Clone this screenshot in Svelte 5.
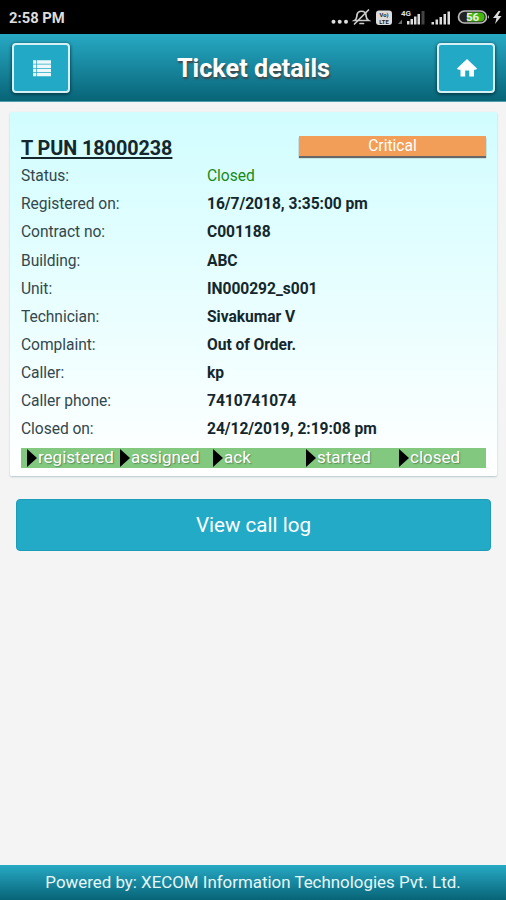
<script lang="ts">
  interface Field {
    label: string;
    value: string;
    closed?: boolean;
  }

  const fields: Field[] = [
    { label: "Status:", value: "Closed", closed: true },
    { label: "Registered on:", value: "16/7/2018, 3:35:00 pm" },
    { label: "Contract no:", value: "C001188" },
    { label: "Building:", value: "ABC" },
    { label: "Unit:", value: "IN000292_s001" },
    { label: "Technician:", value: "Sivakumar V" },
    { label: "Complaint:", value: "Out of Order." },
    { label: "Caller:", value: "kp" },
    { label: "Caller phone:", value: "7410741074" },
    { label: "Closed on:", value: "24/12/2019, 2:19:08 pm" },
  ];

  const steps = ["registered", "assigned", "ack", "started", "closed"];
</script>

<div class="screen">
  <div class="status-bar">
    <span class="clock">2:58 PM</span>
    <svg class="indicators" width="186" height="34" viewBox="0 0 186 34" aria-hidden="true">
      <g fill="#ddd">
        <circle cx="13.5" cy="21.7" r="2" />
        <circle cx="19.7" cy="21.7" r="2" />
        <circle cx="26" cy="21.7" r="2" />
      </g>
      <!-- muted bell -->
      <g fill="none" stroke="#ccc" stroke-width="1.7" stroke-linecap="round">
        <path d="M34.500 20.500c2.500-1.500 2-3 2.500-5.500c.5-5 8.500-5 9 0c.3 3 0 4 2.500 5.500z" />
        <path d="M48.500 10L34.500 24M40 23.500h3.500" />
      </g>
      <rect x="56" y="10.500" width="16" height="14.500" rx="3" fill="#ddd" />
      <text class="volte" x="64" y="16.500" text-anchor="middle">Vo)</text>
      <text class="volte" x="64" y="23.500" text-anchor="middle">LTE</text>
      <text class="network" x="81" y="16">4G</text>
      <g fill="#ddd">
        <path d="M78 24l4-4.500v4.500z" opacity=".5" />
        <path d="M87 21h2.500v3.500H87zM90.500 19H93v5.500h-2.500zM94 16.500h2.500v8H94zM97.500 14H100v10.500h-2.500z" />
        <path d="M101.500 11h3v13.500h-3z" opacity=".3" />
        <path d="M111.500 22h2.500v2.500h-2.500zM115.500 19.500h2.500v5h-2.500zM119.500 17h2.500v7.500h-2.500zM123.500 14h2.500v10.500h-2.500zM127.500 11.500h2.500v13h-2.500z" />
      </g>
      <rect x="138.500" y="11" width="28" height="12" rx="6" fill="#222" stroke="#bbb" stroke-width="1.700" />
      <path d="M147 12.500h13q4.500 0 4.500 4.500t-4.500 4.500h-13z" fill="#42b80f" />
      <path d="M168 15q2 2 0 4z" fill="#bbb" />
      <text class="battery" x="152.500" y="21" text-anchor="middle">56</text>
      <path d="M178.500 11l-5.500 7h3.500l-1.500 6 6.500-8h-3.700l2.700-5z" fill="#ddd" />
    </svg>
  </div>

  <header>
    <button class="icon-button" aria-label="Menu">
      <svg width="18" height="17" viewBox="0 0 18 17" fill="#fff">
        <path d="M0 .3h3.300v3.500H0zM4 .3h14v3.500H4zM0 4.600h3.300v3.300H0zM4 4.600h14v3.300H4zM0 8.700h3.300v3.300H0zM4 8.700h14v3.300H4zM0 12.800h3.300v3.500H0zM4 12.800h14v3.500H4z" opacity=".92" />
      </svg>
    </button>
    <h1>Ticket details</h1>
    <button class="icon-button" aria-label="Home">
      <svg width="20" height="18" viewBox="0 0 20 18" fill="#fff">
        <path d="M10 0L20 9.500Q19.500 11 17 10.700V17.500H12.300V11.500H8.200V17.500H3.500V10.700Q.5 11 0 9.500z" />
      </svg>
    </button>
  </header>

  <main>
    <section class="card">
      <div class="card-head">
        <h2>T PUN 18000238</h2>
        <span class="priority">Critical</span>
      </div>
      <dl>
        {#each fields as field (field.label)}
          <div class="field">
            <dt>{field.label}</dt>
            <dd class:closed={field.closed}>{field.value}</dd>
          </div>
        {/each}
      </dl>
      <ol>
        {#each steps as step (step)}
          <li>{step}</li>
        {/each}
      </ol>
    </section>
    <button class="call-log">View call log</button>
  </main>

  <footer>Powered by: XECOM Information Technologies Pvt. Ltd.</footer>
</div>

<style>
  :global(body) {
    margin: 0;
  }
  .screen {
    display: flex;
    flex-direction: column;
    height: 900px;
    background: #f4f4f4;
    font-family: Roboto, "Liberation Sans", sans-serif;
    color: #14272d;
  }
  .status-bar {
    display: flex;
    align-items: center;
    justify-content: space-between;
    flex: 0 0 34px;
    padding-left: 9px;
    background: #000;
  }
  .clock {
    color: #ddd;
    font-size: 14.8px;
    font-weight: 700;
    padding-top: 2px;
  }
  .volte {
    font-size: 5.8px;
    font-weight: 700;
    fill: #222;
  }
  .network {
    font-size: 8px;
    font-weight: 700;
    fill: #ddd;
  }
  .battery {
    font-size: 11.5px;
    font-weight: 700;
    fill: #eee;
  }
  header {
    display: flex;
    align-items: center;
    justify-content: space-between;
    box-sizing: border-box;
    flex: 0 0 68px;
    padding: 1px 11px 0 12px;
    background: linear-gradient(#27a9c4, #086477);
    border-bottom: 1px solid #4f9cab;
  }
  .icon-button {
    display: flex;
    align-items: center;
    justify-content: center;
    box-sizing: border-box;
    width: 58px;
    height: 50px;
    padding: 0 0 0 2px;
    border: 2px solid #d5f1f6;
    border-radius: 4px;
    background: #22a9c5;
    box-shadow: 0 1px 3px 1px rgb(0 40 50 / 60%);
  }
  h1 {
    margin: 0;
    padding-top: 1px;
    color: #fff;
    font-size: 25.2px;
    font-weight: 700;
    text-shadow: 1px 2px 2px #444;
  }
  main {
    flex: 1;
    padding: 10px 9px 0 10px;
  }
  .card {
    box-sizing: border-box;
    height: 364px;
    padding: 22px 11px 0;
    background: linear-gradient(#d1fdff, #fff);
    border-radius: 2px;
    box-shadow: 0 1px 2px rgb(60 110 120 / 35%);
  }
  .card-head {
    display: flex;
    align-items: flex-start;
    justify-content: space-between;
    height: 28.3px;
  }
  h2 {
    margin: 0;
    font-size: 19.8px;
    font-weight: 700;
    letter-spacing: -0.05px;
    line-height: 29px;
    text-decoration: underline;
    text-decoration-thickness: 2px;
    text-underline-offset: 2px;
  }
  .priority {
    width: 187px;
    height: 20px;
    margin-top: 2px;
    background: #f29e58;
    box-shadow: 0 2px 1px #686868;
    color: #fff;
    font-size: 15.6px;
    line-height: 20px;
    text-align: center;
  }
  dl {
    margin: 0;
  }
  .field {
    display: grid;
    grid-template-columns: 186px 1fr;
    height: 28.1px;
    line-height: 28px;
    font-size: 15.6px;
  }
  dt {
    color: #33474d;
    letter-spacing: -0.05px;
  }
  dd {
    margin: 0;
    font-weight: 700;
    font-size: 15.6px;
    letter-spacing: -0.04px;
  }
  dd.closed {
    color: #168a16;
    font-weight: 400;
  }
  ol {
    display: grid;
    grid-template-columns: repeat(5, 93px);
    height: 20px;
    margin: 4.7px 0 0;
    padding: 0;
    list-style: none;
    background: #82c87e;
  }
  li {
    display: flex;
    align-items: center;
    gap: 1px;
    padding-left: 6px;
    color: #fff;
    font-size: 17px;
    line-height: 19px;
    text-shadow: 1px 1px 1px rgb(70 100 70 / 60%);
  }
  li::before {
    content: "";
    border-left: 10px solid #000;
    border-top: 9.5px solid transparent;
    border-bottom: 9.5px solid transparent;
  }
  .call-log {
    display: block;
    width: 475px;
    height: 52px;
    margin: 23px 0 0 6px;
    border: 1px solid #1b9db8;
    border-radius: 4px;
    background: #22aac7;
    color: #fff;
    font: 20.6px Roboto, "Liberation Sans", sans-serif;
  }
  footer {
    flex: 0 0 35px;
    background: linear-gradient(#27a9c4, #086477);
    color: #e6f7fa;
    font-size: 16.9px;
    line-height: 35px;
    text-align: center;
  }
</style>
